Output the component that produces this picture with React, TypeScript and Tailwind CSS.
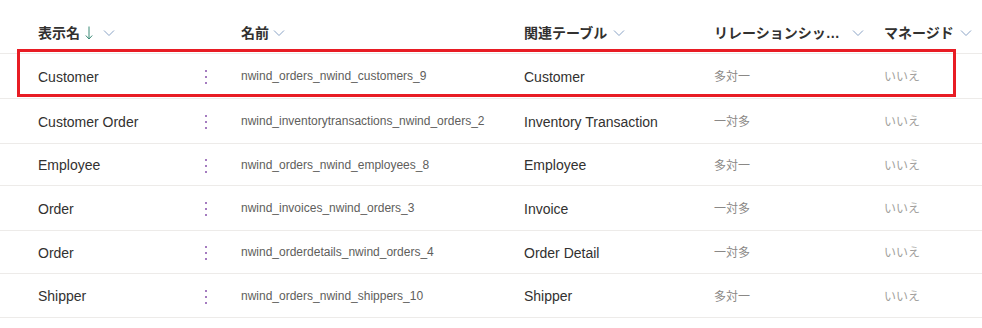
const rows = [
  { display: 'Customer', name: 'nwind_orders_nwind_customers_9', table: 'Customer', kind: '多対一', managed: 'いいえ', h: 'h-[45px]' },
  { display: 'Customer Order', name: 'nwind_inventorytransactions_nwind_orders_2', table: 'Inventory Transaction', kind: '一対多', managed: 'いいえ', h: 'h-[45px]' },
  { display: 'Employee', name: 'nwind_orders_nwind_employees_8', table: 'Employee', kind: '多対一', managed: 'いいえ', h: 'h-[42px]' },
  { display: 'Order', name: 'nwind_invoices_nwind_orders_3', table: 'Invoice', kind: '一対多', managed: 'いいえ', h: 'h-[45px]' },
  { display: 'Order', name: 'nwind_orderdetails_nwind_orders_4', table: 'Order Detail', kind: '一対多', managed: 'いいえ', h: 'h-[43px]' },
  { display: 'Shipper', name: 'nwind_orders_nwind_shippers_10', table: 'Shipper', kind: '多対一', managed: 'いいえ', h: 'h-[44px]' },
];

function Chevron() {
  return (
    <svg width="12" height="8" viewBox="0 0 12 8" className="shrink-0">
      <path d="M1 1.5 L6 6.5 L11 1.5" fill="none" stroke="#8aa3c6" strokeWidth="1" />
    </svg>
  );
}

function SortDown() {
  return (
    <svg width="8" height="14" viewBox="0 0 8 14" className="shrink-0">
      <path d="M4 0.5 V13 M0.8 9.5 L4 13 L7.2 9.5" fill="none" stroke="#3b8a76" strokeWidth="1" />
    </svg>
  );
}

function Dots() {
  return (
    <div className="flex flex-col gap-[4px] pl-[7px]">
      <span className="block w-[2px] h-[2px] bg-[#a57cc0]" />
      <span className="block w-[2px] h-[2px] bg-[#a57cc0]" />
      <span className="block w-[2px] h-[2px] bg-[#a57cc0]" />
    </div>
  );
}

export default function App() {
  return (
    <div
      className="relative w-[982px] h-[328px] bg-white overflow-hidden text-[#323130]"
      style={{ fontFamily: '"Segoe UI", "Liberation Sans", "Noto Sans CJK JP", sans-serif' }}
    >
      <div className="h-[54px] pt-[13px] border-b border-[#edebe9] flex items-center pl-[38px] text-[14px] font-semibold">
        <div className="w-[203px] flex items-center">
          <span>表示名</span>
          <span className="ml-[5px]"><SortDown /></span>
          <span className="ml-[10px]"><Chevron /></span>
        </div>
        <div className="w-[283px] flex items-center gap-[4px]">
          <span>名前</span>
          <Chevron />
        </div>
        <div className="w-[190px] flex items-center gap-[6px]">
          <span>関連テーブル</span>
          <Chevron />
        </div>
        <div className="w-[170px] flex items-center gap-[10px]">
          <span className="w-[128px] truncate">リレーションシップの種類</span>
          <Chevron />
        </div>
        <div className="flex items-center gap-[6px]">
          <span>マネージド</span>
          <Chevron />
        </div>
      </div>

      {rows.map((r, i) => (
        <div key={i} className={`${r.h} pt-[2px] border-b border-[#edebe9] flex items-center pl-[38px]`}>
          <div className="w-[160px] text-[14px]">{r.display}</div>
          <div className="w-[43px]">
            <Dots />
          </div>
          <div className="w-[283px] text-[12px] text-[#605e5c] -mt-[2px]">{r.name}</div>
          <div className="w-[190px] text-[14px]">{r.table}</div>
          <div className="w-[170px] text-[12px] text-[#8a8886]">{r.kind}</div>
          <div className="text-[12px] text-[#a19f9d]">{r.managed}</div>
        </div>
      ))}

      <div className="absolute left-[17px] top-[49px] w-[939px] h-[48px] border-[3px] border-[#e81c24]" />
    </div>
  );
}
